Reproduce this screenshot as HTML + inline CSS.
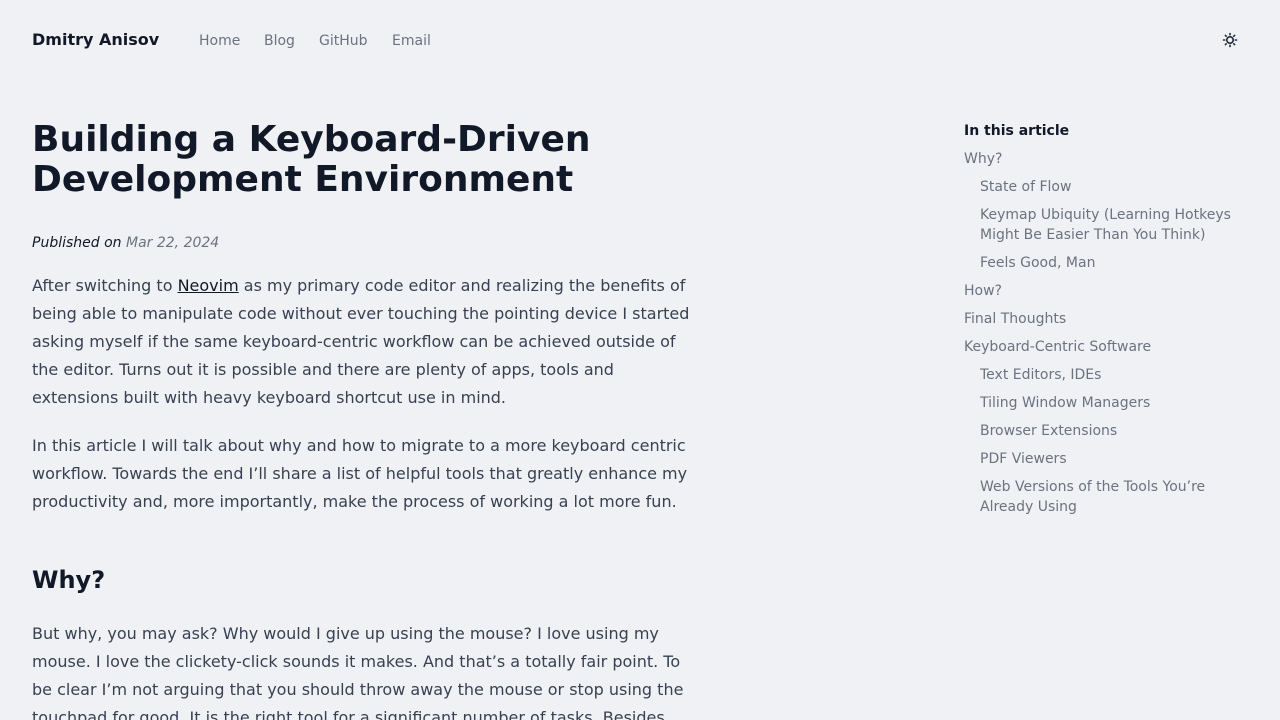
<!DOCTYPE html>
<html style="overflow:hidden"><head><meta charset="utf-8"><style>
html,body{overflow:hidden}
body{margin:0;background:#eff1f5;font-family:"DejaVu Sans","Liberation Sans",sans-serif;color:#374151;width:1280px;height:720px;position:relative}
.logo{position:absolute;left:32px;top:30px;font-weight:bold;font-size:16px;color:#111827;line-height:20px}
.nav{position:absolute;top:32px;font-size:14px;color:#6b7280;line-height:18px}
h1{position:absolute;left:32px;top:120px;margin:0;font-size:36px;line-height:40px;color:#111827;font-weight:bold;width:720px}
.pub{position:absolute;left:32px;top:235px;font-size:14px;font-style:italic;color:#111827}
.pub span{color:#6b7280}
.p{position:absolute;left:32px;width:665px;font-size:16px;line-height:28px;margin:0}
a{color:#111827}
h2{position:absolute;left:32px;top:563px;margin:0;font-size:24px;line-height:34px;color:#111827}
.toc{position:absolute;left:964px;top:121px;font-size:14px;line-height:20px;color:#6b7280;width:290px}
.toc div{margin-bottom:8px}
.toc .s{padding-left:16px}
</style></head><body>
<div class="logo">Dmitry Anisov</div>
<div class="nav" style="left:199px">Home</div>
<div class="nav" style="left:264px">Blog</div>
<div class="nav" style="left:319px">GitHub</div>
<div class="nav" style="left:392px">Email</div>
<svg style="position:absolute;left:1221px;top:31px" width="18" height="18" viewBox="0 0 18 18" stroke="#1f2937" stroke-width="1.6" fill="none" stroke-linecap="round"><circle cx="9" cy="9" r="3.2"/><path d="M9 2.5v1.2M9 14.3v1.2M2.5 9h1.2M14.3 9h1.2M4.4 4.4l.8.8M12.8 12.8l.8.8M4.4 13.6l.8-.8M12.8 5.2l.8-.8"/></svg>
<h1>Building a Keyboard-Driven<br>Development Environment</h1>
<div class="pub">Published on <span>Mar 22, 2024</span></div>
<p class="p" style="top:272px">After switching to <a href="#">Neovim</a> as my primary code editor and realizing the benefits of being able to manipulate code without ever touching the pointing device I started asking myself if the same keyboard-centric workflow can be achieved outside of the editor. Turns out it is possible and there are plenty of apps, tools and extensions built with heavy keyboard shortcut use in mind.</p>
<p class="p" style="top:432px">In this article I will talk about why and how to migrate to a more keyboard centric workflow. Towards the end I’ll share a list of helpful tools that greatly enhance my productivity and, more importantly, make the process of working a lot more fun.</p>
<h2>Why?</h2>
<p class="p" style="top:620px">But why, you may ask? Why would I give up using the mouse? I love using my mouse. I love the clickety-click sounds it makes. And that’s a totally fair point. To be clear I’m not arguing that you should throw away the mouse or stop using the touchpad for good. It is the right tool for a significant number of tasks. Besides</p>
<div class="toc">
<div style="color:#111827;font-weight:bold">In this article</div>
<div>Why?</div>
<div class="s">State of Flow</div>
<div class="s">Keymap Ubiquity (Learning Hotkeys Might Be Easier Than You Think)</div>
<div class="s">Feels Good, Man</div>
<div>How?</div>
<div>Final Thoughts</div>
<div>Keyboard-Centric Software</div>
<div class="s">Text Editors, IDEs</div>
<div class="s">Tiling Window Managers</div>
<div class="s">Browser Extensions</div>
<div class="s">PDF Viewers</div>
<div class="s">Web Versions of the Tools You’re Already Using</div>
</div>
</body></html>
